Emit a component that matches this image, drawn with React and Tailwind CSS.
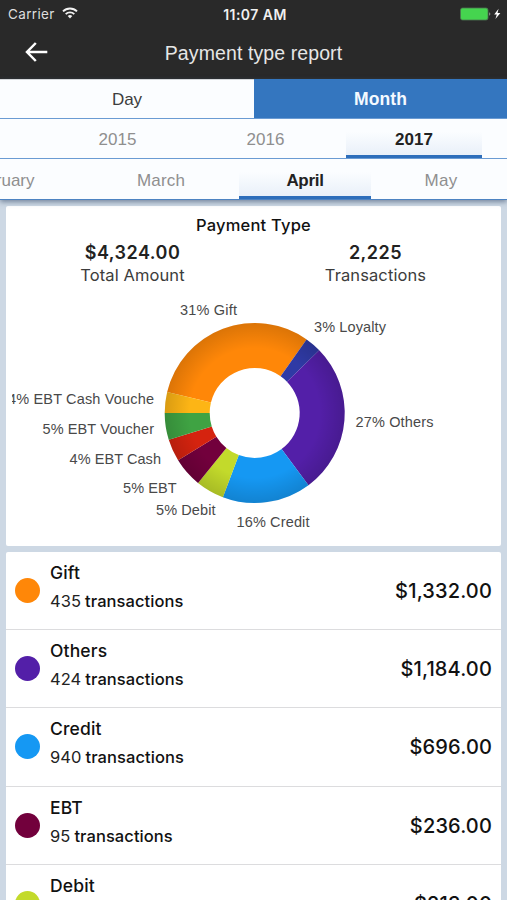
import clsx from "clsx";

const SLICES = [
  { label: "31% Gift", color: "#ff8708", from: -76.5, to: 35.2, x: 180, y: 314.5, width: 57 },
  { label: "3% Loyalty", color: "#2f3aa5", from: 35.2, to: 45.8, x: 314, y: 331.5, width: 72 },
  { label: "27% Others", color: "#531fa8", from: 45.8, to: 143.3, x: 355.5, y: 426.5, width: 78 },
  { label: "16% Credit", color: "#1598f3", from: 143.3, to: 200.7, x: 236.5, y: 527, width: 73 },
  { label: "5% Debit", color: "#c3da2b", from: 200.7, to: 219, x: 156, y: 514.5, width: 59.5 },
  { label: "5% EBT", color: "#72003c", from: 219, to: 238.3, x: 123, y: 492.5, width: 53.5 },
  { label: "4% EBT Cash", color: "#d5230f", from: 238.3, to: 252.7, x: 69.5, y: 463.5, width: 91.5 },
  { label: "5% EBT Voucher", color: "#3fa343", from: 252.7, to: 270, x: 42.5, y: 434, width: 111.5 },
  { label: "4% EBT Cash Vouche", color: "#fdb515", from: 270, to: 283.5, x: 8, y: 404, width: 146 },
];

const ROWS = [
  { name: "Gift", count: "435", amount: "$1,332.00", dot: "bg-[#ff8708]" },
  { name: "Others", count: "424", amount: "$1,184.00", dot: "bg-[#531fa8]" },
  { name: "Credit", count: "940", amount: "$696.00", dot: "bg-[#1598f3]" },
  { name: "EBT", count: "95", amount: "$236.00", dot: "bg-[#72003c]" },
  { name: "Debit", amount: "$213.00", dot: "bg-[#c3da2b]" },
];

const CX = 254.7;
const CY = 413;
const OUTER = 90;
const INNER = 45;

function point(angle, radius) {
  const rad = (angle * Math.PI) / 180;
  return `${CX + radius * Math.sin(rad)} ${CY - radius * Math.cos(rad)}`;
}

function slicePath({ from, to }) {
  return [
    `M${point(from, OUTER)}`,
    `A${OUTER} ${OUTER} 0 0 1 ${point(to, OUTER)}`,
    `L${point(to, INNER)}`,
    `A${INNER} ${INNER} 0 0 0 ${point(from, INNER)}Z`,
  ].join("");
}

function StatusBar() {
  return (
    <div className="grid h-[27px] grid-cols-3 items-center pl-[8px] pr-[5px] pt-px text-[13.5px] text-[#dedede]">
      <div className="flex items-center gap-[7px]">
        <span className="tracking-[0.35px]">Carrier</span>
        <svg className="-mt-[2px]" width="16" height="12" viewBox="0 0 16 12" fill="none" stroke="#f2f2f2" strokeWidth="1.9">
          <path d="M1 4.4a10 10 0 0 1 14 0" />
          <path d="M3.7 7.1a6.2 6.2 0 0 1 8.6 0" />
          <path d="M8 11.6 5.7 9.1a3.3 3.3 0 0 1 4.6 0Z" fill="#f2f2f2" stroke="none" />
        </svg>
      </div>
      <span className="text-center text-[14px] font-semibold tracking-[0.45px] text-[#f0f0f0]">11:07 AM</span>
      <div className="flex items-center justify-end">
        <svg className="-mt-px" width="42" height="14" viewBox="0 0 42 14">
          <rect x="0.5" y="1" width="27.5" height="12" rx="2" fill="#45d44f" stroke="#4b7550" strokeWidth="0.8" />
          <path d="M29.2 5.2a2 2 0 0 1 0 3.6Z" fill="#9a9a9a" />
          <path d="M38.6 1.8 34.2 7.6h2.6L35.4 12l5-6.1h-2.9Z" fill="#fff" />
        </svg>
      </div>
    </div>
  );
}

function Header() {
  return (
    <div className="grid h-[52px] grid-cols-[72px_1fr_72px] items-center">
      <svg className="-mt-[2px] ml-[25px]" width="23" height="20" viewBox="0 0 23 20" fill="none" stroke="#fff" strokeWidth="2.5">
        <path d="M22.3 10H2M10.8 1 2 10l8.8 9" />
      </svg>
      <h1 className="pt-[2px] text-center font-['Liberation_Sans',sans-serif] text-[19.5px] tracking-[0.1px] text-[#e6e6e6]">
        Payment type report
      </h1>
    </div>
  );
}

function ScrollTab({ label, active, className }) {
  return (
    <div
      className={clsx(
        "flex shrink-0 items-center justify-center",
        active
          ? "border-b-[3px] border-[#2d6ebb] bg-linear-to-b from-[#fbfdff] from-35% to-[#e9f0f9] font-bold text-[#222]"
          : "text-[#8f8f8f]",
        className
      )}
    >
      {label}
    </div>
  );
}

function Tabs() {
  return (
    <div className="relative z-10 bg-[#fbfdff] font-['Liberation_Sans',sans-serif] text-[17px] shadow-[0_2px_5px_rgba(70,90,120,0.65)]">
      <div className="flex h-[40px] border-b border-[#6a9bd3]">
        <div className="flex w-[254px] items-center justify-center border-t border-[#d5d7da] pt-px text-[#3d3d3d]">
          Day
        </div>
        <div className="flex flex-1 items-center justify-center bg-[#3476bf] pt-[2px] text-[17.5px] font-bold tracking-[0.1px] text-[#f4faff]">
          Month
        </div>
      </div>
      <div className="flex h-[40px] border-b-[1.5px] border-[#6a9bd3] pl-[43px]">
        <ScrollTab label="2015" className="w-[149px] pt-[3px]" />
        <ScrollTab label="2016" className="w-[147px] pt-[3px]" />
        <ScrollTab label="2017" active className="ml-[7px] w-[136px] pt-[6px]" />
      </div>
      <div className="flex h-[41px] overflow-hidden border-b-[1.5px] border-[#4d83c2]">
        <ScrollTab label="February" className="-ml-[63px] w-[127px] pt-[4px]" />
        <ScrollTab label="March" className="ml-[31px] w-[132px] pt-[4px] tracking-[0.2px]" />
        <ScrollTab label="April" active className="ml-[12px] w-[132px] pt-[7px] tracking-[-0.3px]" />
        <ScrollTab label="May" className="ml-[4px] w-[132px] pt-[4px] tracking-[0.3px]" />
      </div>
    </div>
  );
}

function Total({ value, label }) {
  return (
    <div className="flex w-[243px] flex-col items-center">
      <span className="text-[18px] font-semibold leading-[23px] tracking-[0.5px] text-[#222]">{value}</span>
      <span className="text-[16.5px] leading-[22px] tracking-[0.1px] text-[#3c3c3c]">{label}</span>
    </div>
  );
}

function Donut() {
  return (
    <svg className="block" width="495" height="255" viewBox="6 291 495 255">
      <defs>
        <radialGradient id="shade" gradientUnits="userSpaceOnUse" cx={CX} cy={CY} r={OUTER}>
          <stop offset="0.72" stopColor="#000" stopOpacity="0" />
          <stop offset="1" stopColor="#000" stopOpacity="0.14" />
        </radialGradient>
        <clipPath id="labels">
          <rect x="12" y="291" width="489" height="255" />
        </clipPath>
      </defs>
      {SLICES.map((slice) => (
        <path key={slice.label} d={slicePath(slice)} fill={slice.color} />
      ))}
      <circle cx={CX} cy={CY} r={(OUTER + INNER) / 2} fill="none" stroke="url(#shade)" strokeWidth={OUTER - INNER} />
      <g clipPath="url(#labels)" className="font-['Liberation_Sans',sans-serif] text-[14.5px]" fill="#494949">
        {SLICES.map((slice) => (
          <text key={slice.label} x={slice.x} y={slice.y} textLength={slice.width}>
            {slice.label}
          </text>
        ))}
      </g>
    </svg>
  );
}

function Row({ name, count, amount, dot }) {
  return (
    <li className="flex h-[78.2px] items-center border-b-[1.5px] border-[#dcdcde] pl-[9px] pr-[9px]">
      <span className={clsx("size-[25px] rounded-full", dot)} />
      <div className="ml-[10px] flex-1 self-start pt-[7px]">
        <div className="text-[17.5px] font-medium leading-[28px] tracking-[0.15px]">{name}</div>
        {count && (
          <div className="flex gap-[4px] text-[16.5px] leading-[28px] tracking-[0.07px]">
            <span className="text-[#222]">{count}</span>
            <span className="font-medium">transactions</span>
          </div>
        )}
      </div>
      <span className="pt-px text-[20px] font-medium tracking-[0.15px]">{amount}</span>
    </li>
  );
}

export default function App() {
  return (
    <div className="h-[900px] w-[507px] overflow-hidden bg-[#cdd8e4] font-['Inter',sans-serif] text-[#111]">
      <header className="bg-[#292929]">
        <StatusBar />
        <Header />
      </header>
      <Tabs />
      <main className="px-[6px] pt-[6px]">
        <section className="h-[340px] rounded-[2px] bg-white">
          <h2 className="pt-[8px] text-center text-[16.5px] font-medium leading-[23px] tracking-[0.2px]">
            Payment Type
          </h2>
          <div className="flex h-[54px] pl-[5px] pt-[4px]">
            <Total value="$4,324.00" label="Total Amount" />
            <Total value="2,225" label="Transactions" />
          </div>
          <Donut />
        </section>
        <ul className="mt-[6px] rounded-[2px] bg-white">
          {ROWS.map((row) => (
            <Row key={row.name} {...row} />
          ))}
        </ul>
      </main>
    </div>
  );
}
